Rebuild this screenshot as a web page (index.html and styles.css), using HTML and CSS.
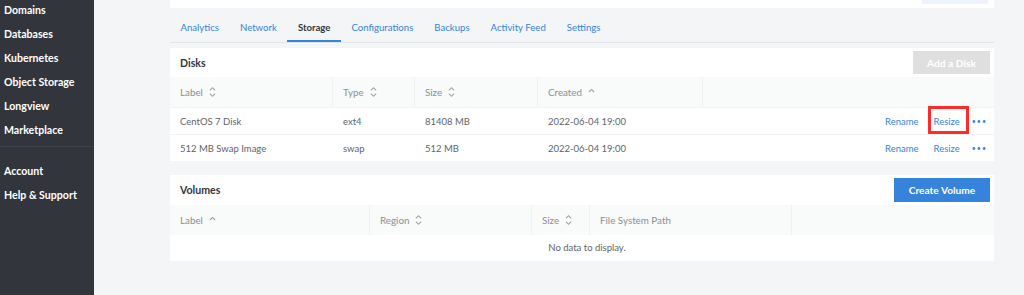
FILE: index.html
```html
<!DOCTYPE html>
<html lang="en">
<head>
    <meta charset="UTF-8">
    <meta name="viewport" content="width=device-width, initial-scale=1.0">
    <title>Linode - Storage</title>
    <link rel="stylesheet" href="styles.css">
</head>
<body>
    <nav class="sidebar">
        <a class="nav-item">Domains</a>
        <a class="nav-item">Databases</a>
        <a class="nav-item">Kubernetes</a>
        <a class="nav-item">Object Storage</a>
        <a class="nav-item">Longview</a>
        <a class="nav-item">Marketplace</a>
        <div class="nav-divider"></div>
        <a class="nav-item">Account</a>
        <a class="nav-item">Help &amp; Support</a>
    </nav>

    <main class="content">
        <div class="top-card">
            <span class="top-btn"></span>
        </div>

        <div class="tabs">
            <span class="tab">Analytics</span>
            <span class="tab">Network</span>
            <span class="tab active">Storage</span>
            <span class="tab">Configurations</span>
            <span class="tab">Backups</span>
            <span class="tab">Activity Feed</span>
            <span class="tab">Settings</span>
        </div>

        <section class="card">
            <div class="card-head">
                <h2>Disks</h2>
                <button class="btn disabled">Add a Disk</button>
            </div>
            <div class="table disks">
                <div class="th">Label <svg class="sort" viewBox="0 0 10 14"><path d="M2 5l3-3 3 3M2 9l3 3 3-3"/></svg></div>
                <div class="th">Type <svg class="sort" viewBox="0 0 10 14"><path d="M2 5l3-3 3 3M2 9l3 3 3-3"/></svg></div>
                <div class="th">Size <svg class="sort" viewBox="0 0 10 14"><path d="M2 5l3-3 3 3M2 9l3 3 3-3"/></svg></div>
                <div class="th">Created <svg class="sort" viewBox="0 0 10 14"><path d="M2 7l3-3 3 3"/></svg></div>
                <div class="th last"></div>

                <div class="td">CentOS 7 Disk</div>
                <div class="td">ext4</div>
                <div class="td">81408 MB</div>
                <div class="td">2022-06-04 19:00</div>
                <div class="td actions">
                    <span class="link">Rename</span>
                    <span class="link highlight">Resize</span>
                    <span class="more">&bull;&bull;&bull;</span>
                </div>

                <div class="td">512 MB Swap Image</div>
                <div class="td">swap</div>
                <div class="td">512 MB</div>
                <div class="td">2022-06-04 19:00</div>
                <div class="td actions">
                    <span class="link">Rename</span>
                    <span class="link">Resize</span>
                    <span class="more">&bull;&bull;&bull;</span>
                </div>
            </div>
        </section>

        <section class="card">
            <div class="card-head tall">
                <h2>Volumes</h2>
                <button class="btn primary">Create Volume</button>
            </div>
            <div class="table volumes">
                <div class="th">Label <svg class="sort" viewBox="0 0 10 14"><path d="M2 7l3-3 3 3"/></svg></div>
                <div class="th">Region <svg class="sort" viewBox="0 0 10 14"><path d="M2 5l3-3 3 3M2 9l3 3 3-3"/></svg></div>
                <div class="th">Size <svg class="sort" viewBox="0 0 10 14"><path d="M2 5l3-3 3 3M2 9l3 3 3-3"/></svg></div>
                <div class="th">File System Path</div>
                <div class="th last"></div>
                <div class="empty">No data to display.</div>
            </div>
        </section>
    </main>
</body>
</html>
```

FILE: styles.css
```css
body {
    margin: 0;
    font-family: Lato, "Open Sans", sans-serif;
    background-color: #f4f5f6;
    display: flex;
    height: 295px;
    overflow: hidden;
}
.sidebar {
    width: 94px;
    flex-shrink: 0;
    background-color: #32363c;
    display: flex;
    flex-direction: column;
    padding-top: 2px;
}
.nav-item {
    display: block;
    color: #ffffff;
    font-weight: 700;
    font-size: 10.6px;
    height: 24px;
    line-height: 16px;
    padding-left: 4px;
    white-space: nowrap;
}
.nav-divider {
    height: 1px;
    background-color: #3d4249;
    margin: 0 0 16px;
}
.content {
    margin-left: 76px;
    width: 824px;
}
.top-card {
    background-color: #fff;
    height: 8px;
    display: flex;
    justify-content: flex-end;
    padding-right: 6px;
}
.top-btn {
    width: 66px;
    height: 4px;
    background-color: #eef3fb;
    border-radius: 0 0 2px 2px;
}
.tabs {
    display: flex;
    margin-top: 10px;
    height: 24px;
    border-bottom: 1px solid #e3e5e8;
}
.tab {
    padding: 0 10.5px;
    font-size: 9.6px;
    color: #3683dc;
    line-height: 20px;
    box-sizing: border-box;
    height: 24px;
}
.tab.active {
    color: #32363c;
    font-weight: 700;
    border-bottom: 2px solid #3683dc;
}
.card {
    background-color: #fff;
    margin-top: 5px;
    margin-bottom: 14px;
}
.card-head {
    display: flex;
    justify-content: space-between;
    align-items: center;
    height: 29px;
    padding: 0 4px 0 10px;
}
.card-head.tall {
    height: 30px;
}
.card-head h2 {
    margin: 0;
    font-size: 10.6px;
    font-weight: 700;
    color: #32363c;
}
.btn {
    border: none;
    font-family: inherit;
    font-weight: 700;
    font-size: 10.2px;
    color: #fff;
    height: 23px;
    padding: 0 11px;
}
.btn.disabled {
    background-color: #dfdfdf;
    width: 77px;
}
.btn.primary {
    background-color: #3683dc;
    width: 96px;
    height: 24px;
}
.table {
    display: grid;
}
.disks {
    grid-template-columns: 163px 82px 123px 165px 1fr;
}
.volumes {
    grid-template-columns: 200px 162px 58px 202px 1fr;
}
.th {
    background-color: #f9fafa;
    height: 30px;
    display: flex;
    align-items: center;
    padding-left: 10px;
    font-size: 9.8px;
    color: #8c8f94;
    border-right: 1px solid #f0f1f2;
}
.th.last {
    border-right: none;
}
.sort {
    width: 9px;
    height: 12px;
    margin-left: 5px;
    fill: none;
    stroke: #9da0a4;
    stroke-width: 1.3;
}
.td {
    height: 27px;
    display: flex;
    align-items: center;
    padding-left: 10px;
    font-size: 9.5px;
    color: #606469;
    border-top: 1px solid #f2f3f4;
    box-sizing: border-box;
}
.actions {
    justify-content: flex-end;
    padding-right: 7px;
}
.link {
    color: #3683dc;
    font-size: 9.5px;
    margin-left: 14px;
    position: relative;
}
.link:first-child {
    margin-right: 1px;
}
.highlight::after {
    content: "";
    position: absolute;
    left: -6px;
    right: -9px;
    top: -10px;
    bottom: -7px;
    border: 3px solid #ff2b2b;
}
.more {
    color: #3683dc;
    font-size: 7px;
    letter-spacing: 1px;
    margin-left: 12px;
}
.empty {
    grid-column: 1 / -1;
    height: 26px;
    line-height: 26px;
    text-align: center;
    padding-left: 10px;
    font-size: 9.5px;
    color: #606469;
}
```
